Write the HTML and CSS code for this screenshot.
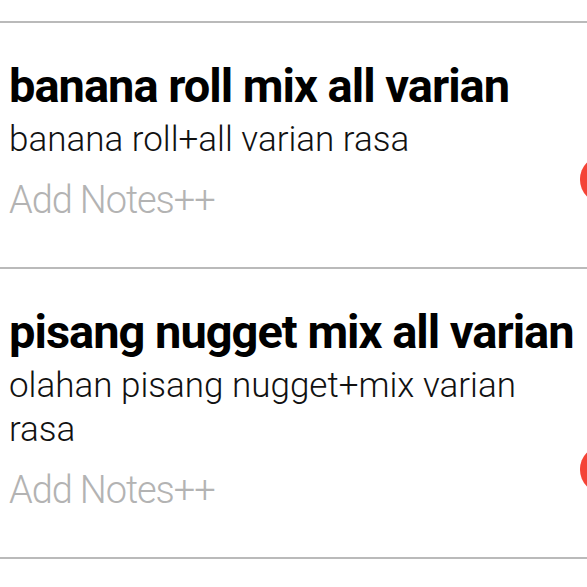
FILE: index.html
```html
<!DOCTYPE html>
<html lang="id">
<head>
    <meta charset="UTF-8">
    <meta name="viewport" content="width=device-width, initial-scale=1.0">
    <title>Keranjang</title>
    <link rel="stylesheet" href="styles.css">
</head>
<body>
    <div class="cart">
        <div class="cart-item">
            <div class="item-info">
                <h2 class="item-name">banana roll mix all varian</h2>
                <p class="item-desc">banana roll+all varian rasa</p>
                <div class="item-notes">Add Notes++</div>
            </div>
            <button class="item-action" type="button" aria-label="Tambah"></button>
        </div>
        <div class="cart-item">
            <div class="item-info">
                <h2 class="item-name">pisang nugget mix all varian</h2>
                <p class="item-desc">olahan pisang nugget+mix varian rasa</p>
                <div class="item-notes">Add Notes++</div>
            </div>
            <button class="item-action" type="button" aria-label="Tambah"></button>
        </div>
    </div>
</body>
</html>
```

FILE: styles.css
```css
html, body {
    overflow: hidden;
}
body {
    margin: 0;
    background: #fff;
    font-family: Roboto, "Liberation Sans", Arial, sans-serif;
    color: #000;
}
.cart {
    padding-top: 21px;
}
.cart-item {
    display: flex;
    align-items: flex-end;
    padding: 35px 0 44px 9px;
    border-top: 2px solid #bababa;
}
.cart-item:last-child {
    border-bottom: 2px solid #bababa;
}
.item-info {
    flex: 0 0 571px;
}
.item-name {
    margin: 0;
    font-size: 47px;
    line-height: 56px;
    font-weight: 700;
    letter-spacing: -1px;
}
.item-desc {
    margin: 4px 0 0;
    font-size: 35px;
    line-height: 44px;
    font-weight: 300;
    color: #111;
}
.item-notes {
    margin-top: 15px;
    font-size: 38px;
    line-height: 46px;
    font-weight: 300;
    color: #b3b3b3;
    letter-spacing: -1.1px;
}
.item-action {
    flex: 0 0 120px;
    height: 47px;
    margin-bottom: 20px;
    padding: 0;
    border: none;
    border-radius: 23px;
    background: #f44336;
}
```
